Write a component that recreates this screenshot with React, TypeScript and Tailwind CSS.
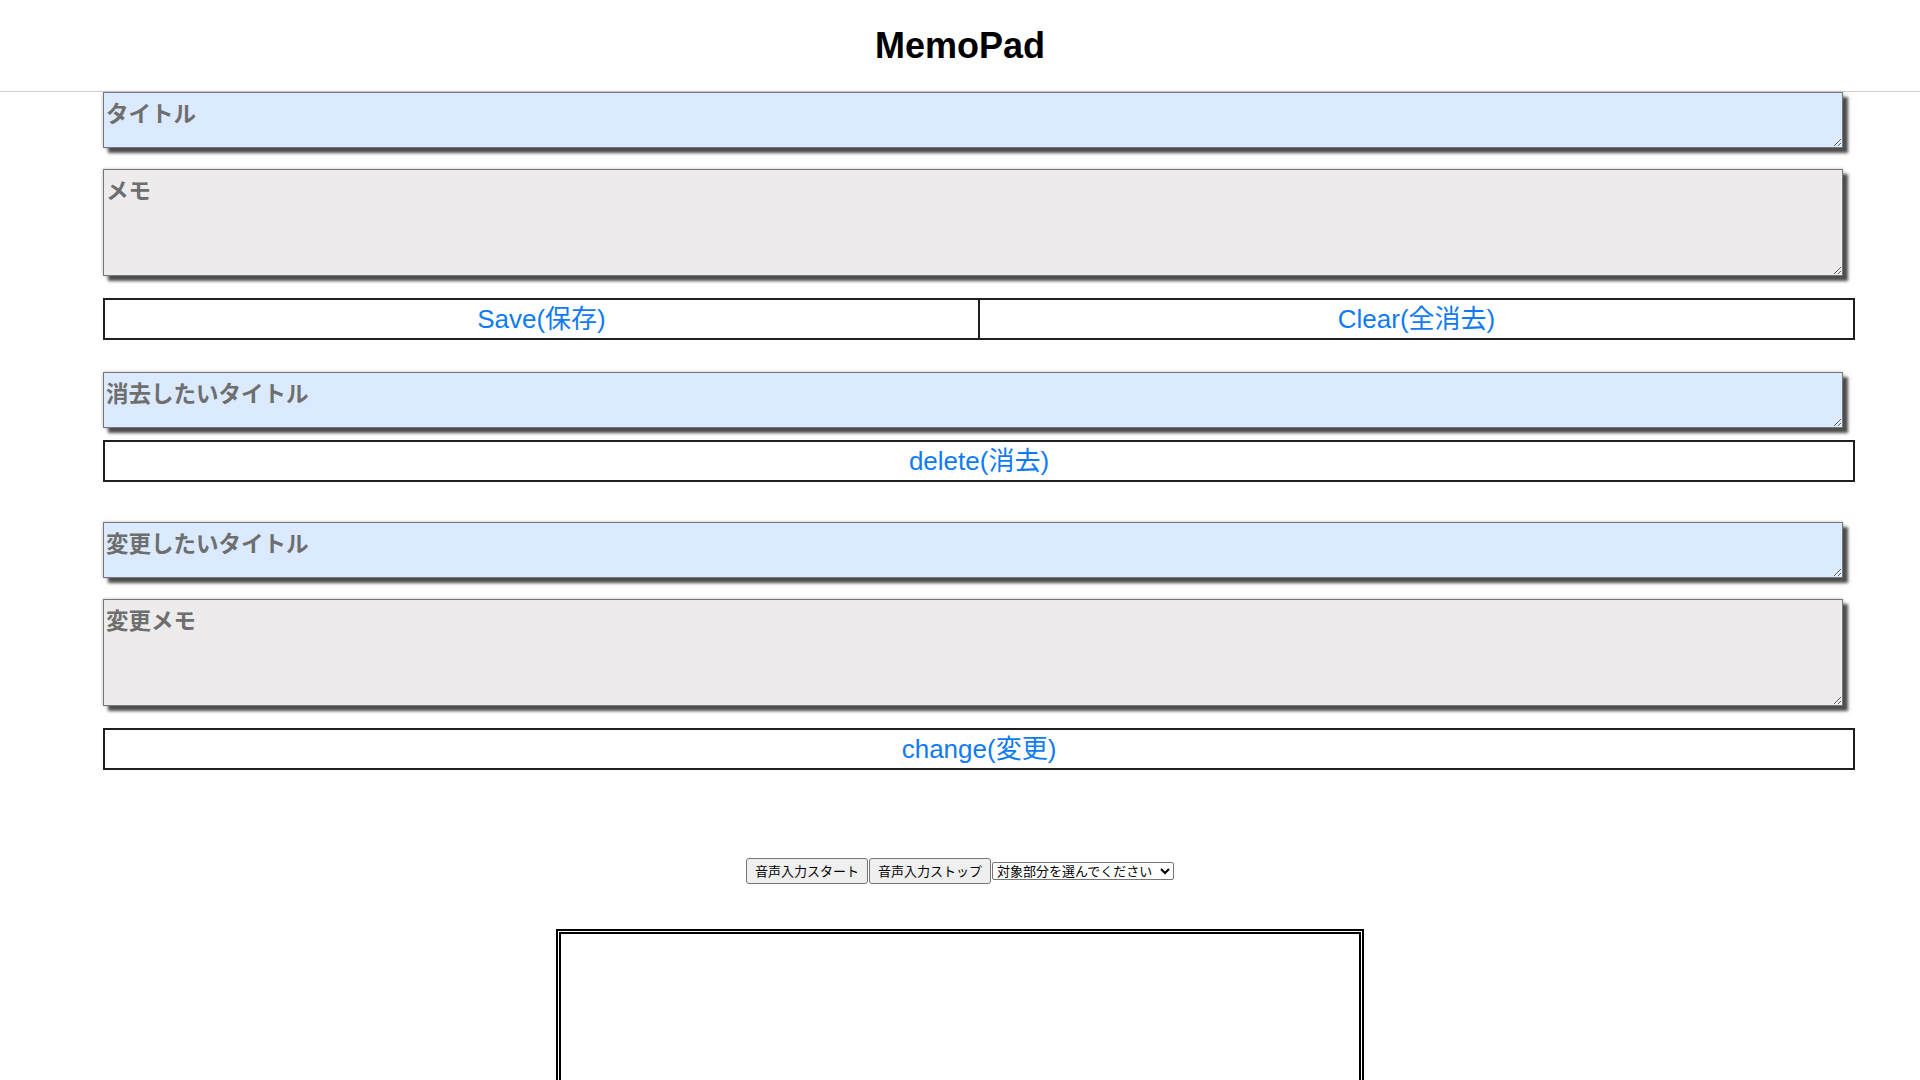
import React from "react";

const fontStack = "font-['Liberation_Sans','Noto_Sans_CJK_JP',sans-serif]";

function Area({ placeholder, tall, blue }: { placeholder: string; tall?: boolean; blue?: boolean }) {
  return (
    <textarea
      placeholder={placeholder}
      className={
        "block w-[1740px] border border-[#777777] px-[2px] pt-[3px] text-[22.5px] font-bold leading-[33px] text-[#333] placeholder:text-[#6e6e6e] shadow-[5px_5px_3px_#4d4d4d,0_0_3px_#bbbbbb] outline-none font-['Noto_Sans_CJK_JP','Noto_Sans',sans-serif] " +
        (tall ? "h-[107px] " : "h-[56px] ") +
        (blue ? "bg-[#dbeafe]" : "bg-[#edebeb]")
      }
    />
  );
}

function Btn({ label, extra }: { label: string; extra?: string }) {
  return (
    <button
      className={
        "h-[42px] border-2 border-[#1f1f1f] bg-white text-[26px] text-[#0f7bf2] flex items-center justify-center " +
        fontStack +
        " " +
        (extra ?? "")
      }
    >
      {label}
    </button>
  );
}

export default function App() {
  return (
    <div className={"min-h-screen bg-white " + fontStack}>
      <header className="h-[92px] border-b border-[#cccccc] flex items-center justify-center">
        <h1 className="text-[36px] font-bold text-black">MemoPad</h1>
      </header>

      <main className="ml-[103px] w-[1752px]">
        <Area placeholder="タイトル" blue />
        <div className="mt-[21px]">
          <Area placeholder="メモ" tall />
        </div>
        <div className="mt-[22px] flex">
          <Btn label="Save(保存)" extra="w-[877px]" />
          <Btn label="Clear(全消去)" extra="w-[875px] border-l-0" />
        </div>

        <div className="mt-[32px]">
          <Area placeholder="消去したいタイトル" blue />
        </div>
        <div className="mt-[12px]">
          <Btn label="delete(消去)" extra="w-full" />
        </div>

        <div className="mt-[40px]">
          <Area placeholder="変更したいタイトル" blue />
        </div>
        <div className="mt-[21px]">
          <Area placeholder="変更メモ" tall />
        </div>
        <div className="mt-[22px]">
          <Btn label="change(変更)" extra="w-full" />
        </div>
      </main>

      <div className="mt-[88px] flex justify-center items-center gap-px font-['Noto_Sans_CJK_JP',sans-serif]">
        <button className="w-[122px] h-[26px] bg-[#efefef] border border-[#767676] rounded-[3px] text-[13px] text-black flex items-center justify-center">
          音声入力スタート
        </button>
        <button className="w-[122px] h-[26px] bg-[#efefef] border border-[#767676] rounded-[3px] text-[13px] text-black flex items-center justify-center">
          音声入力ストップ
        </button>
        <select className="w-[182px] h-[18px] border border-[#767676] rounded-[2px] bg-white text-[13px] leading-[15px] py-0 text-black font-['Liberation_Sans','Noto_Sans_CJK_JP',sans-serif]">
          <option>対象部分を選んでください</option>
        </select>
      </div>

      <div className="mt-[45px] mx-auto w-[808px] h-[220px] border-[5px] border-double border-black bg-white" />
    </div>
  );
}
